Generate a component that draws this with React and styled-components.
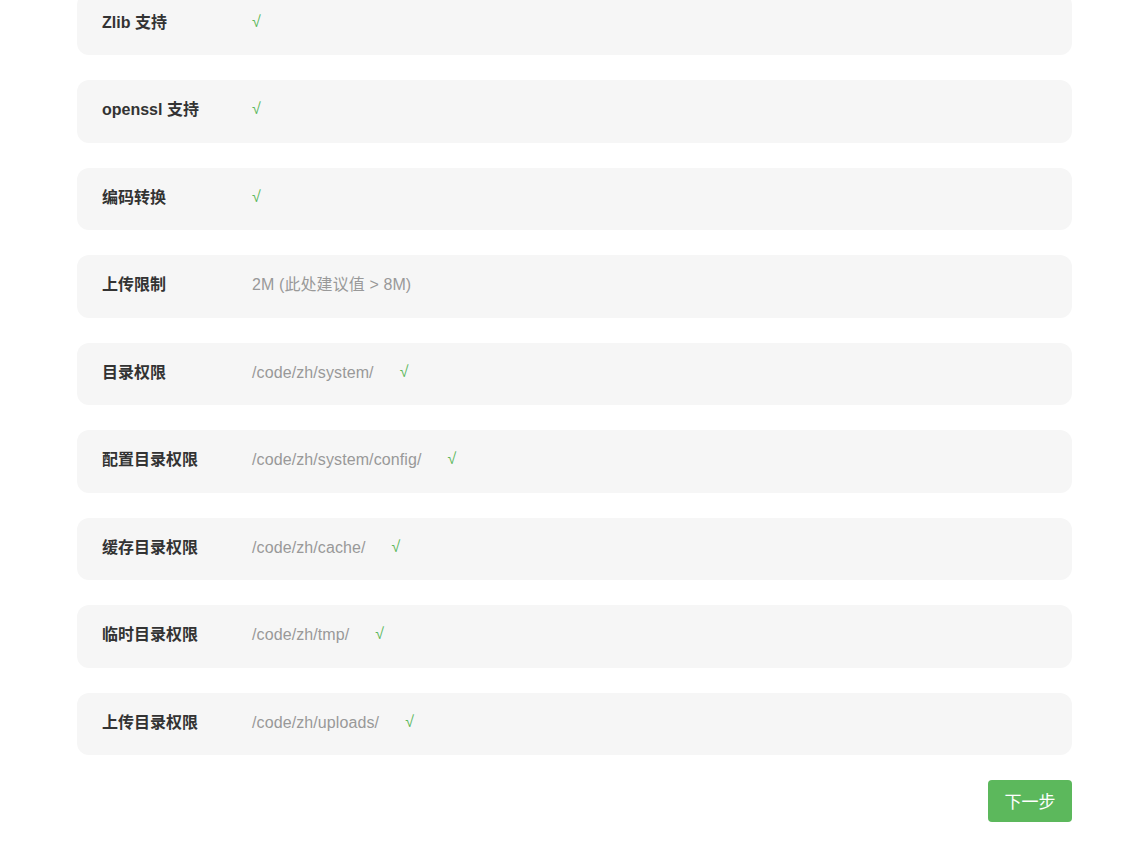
import React from 'react';
import styled, { createGlobalStyle } from 'styled-components';

const GlobalStyle = createGlobalStyle`
    html, body {
        margin: 0;
        padding: 0;
        background: #fff;
        font-family: "Liberation Sans", Arial, "Noto Sans CJK SC", sans-serif;
        overflow: hidden;
    }
`;

const checks = [
    { label: 'Zlib 支持', ok: true },
    { label: 'openssl 支持', ok: true },
    { label: '编码转换', ok: true },
    { label: '上传限制', value: '2M (此处建议值 > 8M)' },
    { label: '目录权限', value: '/code/zh/system/', ok: true },
    { label: '配置目录权限', value: '/code/zh/system/config/', ok: true },
    { label: '缓存目录权限', value: '/code/zh/cache/', ok: true },
    { label: '临时目录权限', value: '/code/zh/tmp/', ok: true },
    { label: '上传目录权限', value: '/code/zh/uploads/', ok: true },
];

const App = () => {
    return (
        <>
            <GlobalStyle />
            <Page>
                <List>
                    {checks.map((item) => (
                        <Row key={item.label}>
                            <Label>{item.label}</Label>
                            <Value>
                                {item.value ? <Path>{item.value}</Path> : null}
                                {item.ok ? <Check spaced={!!item.value}>√</Check> : null}
                            </Value>
                        </Row>
                    ))}
                </List>
                <Footer>
                    <NextBtn>下一步</NextBtn>
                </Footer>
            </Page>
        </>
    );
};

export default App;

const Page = styled.div`
    width: 995px;
    margin: -7.5px 0 0 77px;
`;

const List = styled.div`
    display: flex;
    flex-direction: column;
    gap: 25px;
`;

const Row = styled.div`
    display: flex;
    align-items: baseline;
    height: 62.5px;
    padding: 16px 25px 0;
    background: #f6f6f6;
    border-radius: 12px;
    box-sizing: border-box;
`;

const Label = styled.div`
    width: 150px;
    flex-shrink: 0;
    font-size: 16px;
    font-weight: bold;
    color: #333;
`;

const Value = styled.div`
    font-size: 16px;
    color: #999;
`;

const Path = styled.span`
    letter-spacing: 0.1px;
`;

const Check = styled.span`
    color: #5cb85c;
    font-size: 16px;
    margin-left: ${(props) => props.spaced ? '26px' : '0'};
    position: relative;
    top: -1px;
`;

const Footer = styled.div`
    display: flex;
    justify-content: flex-end;
    padding-top: 25px;
`;

const NextBtn = styled.button`
    width: 84px;
    height: 42px;
    padding: 0 0 2px;
    border: none;
    border-radius: 4px;
    background: #5cb85c;
    color: #fff;
    font-size: 17px;
    font-family: inherit;
    cursor: pointer;
`;
